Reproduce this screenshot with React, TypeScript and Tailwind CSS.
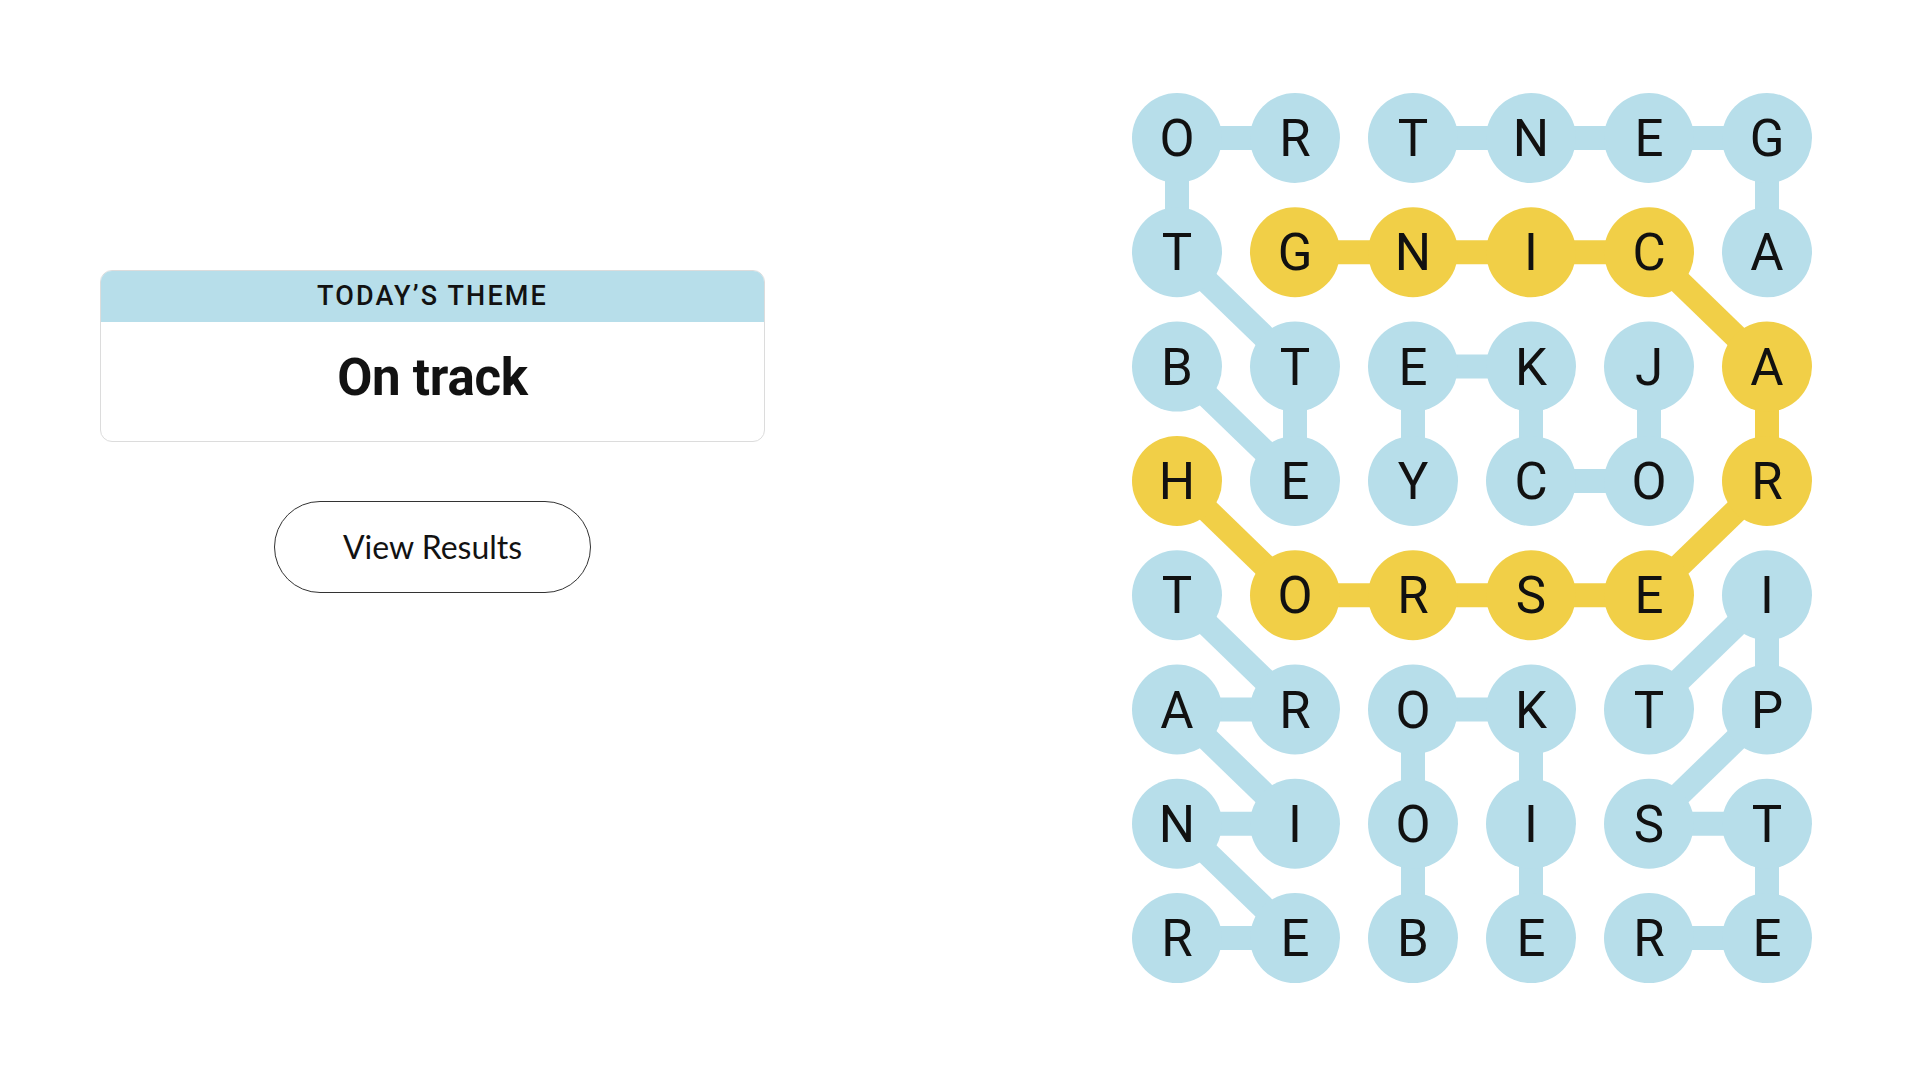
import React from "react";

const grid = ["ORTNEG", "TGNICA", "BTEKJA", "HEYCOR", "TORSEI", "AROKTP", "NIOIST", "REBERE"];

type Cell = [number, number];

// found words, each as the path of [row, col] it takes through the grid
const words: { path: Cell[]; spangram?: boolean }[] = [
  { path: [[3, 0], [4, 1], [4, 2], [4, 3], [4, 4], [3, 5], [2, 5], [1, 4], [1, 3], [1, 2], [1, 1]], spangram: true },
  { path: [[2, 0], [3, 1], [2, 1], [1, 0], [0, 0], [0, 1]] },
  { path: [[1, 5], [0, 5], [0, 4], [0, 3], [0, 2]] },
  { path: [[2, 4], [3, 4], [3, 3], [2, 3], [2, 2], [3, 2]] },
  { path: [[4, 0], [5, 1], [5, 0], [6, 1], [6, 0], [7, 1], [7, 0]] },
  { path: [[7, 2], [6, 2], [5, 2], [5, 3], [6, 3], [7, 3]] },
  { path: [[5, 4], [4, 5], [5, 5], [6, 4], [6, 5], [7, 5], [7, 4]] },
];

const BLUE = "#b7deea";
const YELLOW = "#f1cf47";

const cx = (c: number) => 57 + 118 * c;
const cy = (r: number) => 58 + 114.3 * r;

function Board() {
  const colorOf: Record<string, string> = {};
  words.forEach((w) => w.path.forEach(([r, c]) => (colorOf[`${r}-${c}`] = w.spangram ? YELLOW : BLUE)));

  return (
    <svg width="710" height="920" viewBox="0 0 710 920" className="block">
      {words.map((w, i) =>
        w.path.slice(1).map(([r, c], j) => {
          const [pr, pc] = w.path[j];
          return (
            <line
              key={`${i}-${j}`}
              x1={cx(pc)}
              y1={cy(pr)}
              x2={cx(c)}
              y2={cy(r)}
              stroke={w.spangram ? YELLOW : BLUE}
              strokeWidth={24}
            />
          );
        })
      )}
      {grid.map((row, r) =>
        row.split("").map((ch, c) => (
          <g key={`${r}-${c}`}>
            <circle cx={cx(c)} cy={cy(r)} r={45} fill={colorOf[`${r}-${c}`] ?? BLUE} />
            <text
              x={cx(c)}
              y={cy(r) + 18}
              textAnchor="middle"
              fontSize={51}
              fill="#111111"
              style={{ fontFamily: "Roboto, 'Liberation Sans', sans-serif" }}
            >
              {ch}
            </text>
          </g>
        ))
      )}
    </svg>
  );
}

export default function App() {
  return (
    <div className="flex h-[1080px] w-[1920px] bg-white text-[#121212]">
      <div className="ml-[100px] mt-[270px] flex w-[665px] flex-col items-center self-start">
        <div className="w-full overflow-hidden rounded-[12px] border border-[#dcdcdc]">
          <div className="flex h-[51px] items-center justify-center bg-[#b7deea]">
            <span className="font-['Roboto','Liberation_Sans',sans-serif] text-[27px] font-medium uppercase tracking-[0.08em] text-[#121212]">
              Today’s Theme
            </span>
          </div>
          <div className="flex h-[119px] items-center justify-center pb-[6px]">
            <span className="font-['Roboto','Liberation_Sans',sans-serif] text-[51px] font-bold tracking-[-0.005em] text-[#121212]">
              On track
            </span>
          </div>
        </div>
        <button
          type="button"
          className="mt-[59px] flex h-[92px] w-[317px] items-center justify-center rounded-full border-[1.5px] border-[#333333] bg-white font-['Lato','Liberation_Sans',sans-serif] text-[32px] text-[#121212]"
        >
          View Results
        </button>
      </div>
      <div className="ml-[355px] mt-[80px] self-start">
        <Board />
      </div>
    </div>
  );
}
